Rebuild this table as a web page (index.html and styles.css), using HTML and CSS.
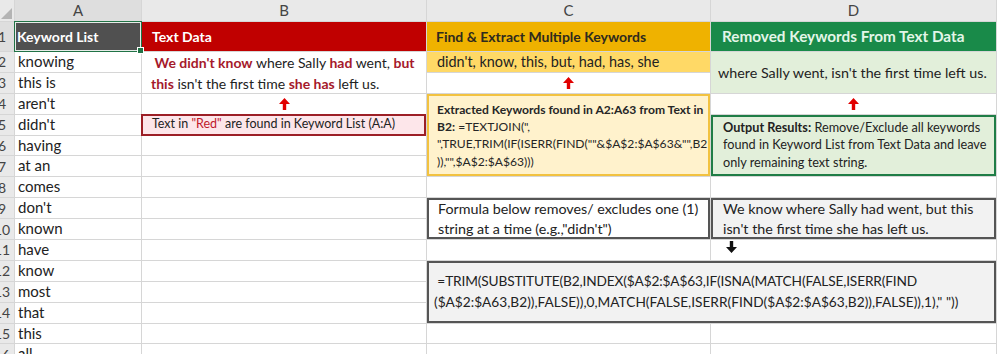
FILE: index.html
```html
<!DOCTYPE html>
<html>
<head>
<meta charset="utf-8">
<link rel="stylesheet" href="styles.css">
</head>
<body>
<div class="sheet">
  <div class="corner"><svg width="14" height="21" viewBox="0 0 14 21"><polygon points="12,8 12,19 1,19" fill="#b4b4b4"/></svg></div>
  <div class="ch sel">A</div>
  <div class="ch">B</div>
  <div class="ch">C</div>
  <div class="ch">D</div>

  <!-- row 1 -->
  <div class="rh sel"><span>1</span></div>
  <div class="hd a1">Keyword List<i class="handle"></i></div>
  <div class="hd b1">Text Data</div>
  <div class="hd c1">Find &amp; Extract Multiple Keywords</div>
  <div class="hd d1">Removed Keywords From Text Data</div>

  <!-- merged / special cells -->
  <div class="b2">&nbsp;<span class="kw">We didn't know</span> where Sally <span class="kw">had</span> went, <span class="kw">but</span><br><span class="kw">this</span> isn't the first time <span class="kw">she has</span> left us.</div>
  <div class="c2">didn't, know, this, but, had, has, she</div>
  <div class="arrow c3"><svg width="11" height="12" viewBox="0 0 11 12"><polygon points="5.5,0 11,6 7.2,6 7.2,12 3.8,12 3.8,6 0,6" fill="#e00000"/></svg></div>
  <div class="d2">where Sally went, isn't the first time left us.</div>
  <div class="arrow b4"><svg width="11" height="12" viewBox="0 0 11 12"><polygon points="5.5,0 11,6 7.2,6 7.2,12 3.8,12 3.8,6 0,6" fill="#e00000"/></svg></div>
  <div class="arrow d4"><svg width="11" height="12" viewBox="0 0 11 12"><polygon points="5.5,0 11,6 7.2,6 7.2,12 3.8,12 3.8,6 0,6" fill="#e00000"/></svg></div>
  <div class="box c4"><b>Extracted Keywords found in A2:A63 from Text in</b><br><b>B2:</b> =TEXTJOIN(",<br>",TRUE,TRIM(IF(ISERR(FIND(""&amp;$A$2:$A$63&amp;"",B2<br>)),"",$A$2:$A$63)))</div>
  <div class="b5">Text in <span class="red">"Red"</span> are found in Keyword List (A:A)</div>
  <div class="box d5"><b>Output Results:</b> Remove/Exclude all keywords<br>found in Keyword List from Text Data and leave<br>only remaining text string.</div>
  <div class="box mid c9"><div>Formula below removes/ excludes one (1)<br>string at a time (e.g.,"didn't")</div></div>
  <div class="box mid d9"><div>We know where Sally had went, but this<br>isn't the first time she has left us.</div></div>
  <div class="arrow d11"><svg width="11" height="12" viewBox="0 0 11 12"><polygon points="5.5,12 11,6 7.2,6 7.2,0 3.8,0 3.8,6 0,6" fill="#111"/></svg></div>
  <div class="box c12"><span class="f1">&nbsp;=TRIM(SUBSTITUTE(B2,INDEX($A$2:$A$63,IF(ISNA(MATCH(FALSE,ISERR(FIND</span><br>($A$2:$A63,B2)),FALSE)),0,MATCH(FALSE,ISERR(FIND($A$2:$A$63,B2)),FALSE)),1)," "))</div>

  <!-- row 2 -->
  <div class="rh"><span>2</span></div><div class="a">knowing</div>
  <!-- row 3 -->
  <div class="rh"><span>3</span></div><div class="a">this is</div>
  <!-- row 4 -->
  <div class="rh"><span>4</span></div><div class="a">aren't</div>
  <!-- row 5 -->
  <div class="rh"><span>5</span></div><div class="a">didn't</div>
  <!-- row 6 -->
  <div class="rh"><span>6</span></div><div class="a">having</div><div class="c"></div>
  <!-- row 7 -->
  <div class="rh"><span>7</span></div><div class="a">at an</div><div class="c"></div>
  <!-- row 8 -->
  <div class="rh"><span>8</span></div><div class="a">comes</div><div class="c"></div><div class="c"></div><div class="c"></div>
  <!-- row 9 -->
  <div class="rh"><span>9</span></div><div class="a">don't</div><div class="c"></div>
  <!-- row 10 -->
  <div class="rh"><span>10</span></div><div class="a">known</div><div class="c"></div>
  <!-- row 11 -->
  <div class="rh"><span>11</span></div><div class="a">have</div><div class="c"></div><div class="c"></div>
  <!-- row 12 -->
  <div class="rh"><span>12</span></div><div class="a">know</div><div class="c"></div>
  <!-- row 13 -->
  <div class="rh"><span>13</span></div><div class="a">most</div><div class="c"></div>
  <!-- row 14 -->
  <div class="rh"><span>14</span></div><div class="a">that</div><div class="c"></div>
  <!-- row 15 -->
  <div class="rh"><span>15</span></div><div class="a">this</div><div class="c"></div><div class="c"></div><div class="c"></div>
  <!-- row 16 -->
  <div class="rh"><span>16</span></div><div class="a">all</div><div class="c"></div><div class="c"></div><div class="c"></div>
</div>
</body>
</html>
```
FILE: styles.css
```css
html, body {
  margin: 0;
  padding: 0;
}
body {
  width: 998px;
  height: 354px;
  overflow: hidden;
  background: #fff;
  font-family: Lato, "Open Sans", sans-serif;
  color: #222;
}
.sheet {
  display: grid;
  grid-template-columns: 14px 126px 284px 283px 285px;
  grid-template-rows: 21px 29px repeat(15, 19.9px);
  gap: 1px;
  background: #d6d6d6;
  width: max-content;
  padding-right: 1px;
}
.corner {
  background: #e9e9e9;
}
.corner svg { display: block; }
.ch {
  background: #e9e9e9;
  color: #444;
  font-size: 15px;
  line-height: 21px;
  text-align: center;
}
.ch.sel { background: #dedede; }
.rh {
  grid-column: 1;
  background: #e9e9e9;
  color: #444;
  font-size: 14px;
  overflow: hidden;
  display: flex;
  align-items: center;
}
.rh.sel { background: #dedede; }
.rh span {
  flex: 0 0 24px;
  margin-left: -10px;
  text-align: center;
}
.a, .c { background: #fff; }
.a {
  font-size: 15px;
  line-height: 19px;
  padding-left: 3px;
  white-space: nowrap;
}
.hd {
  font-weight: bold;
  font-size: 14px;
  line-height: 29px;
  white-space: nowrap;
}
.a1 {
  position: relative;
  z-index: 2;
  background: #505050;
  color: #fff;
  padding-left: 2px;
  outline: 1px solid #217346;
  box-shadow: inset 0 0 0 1px #e6ece8;
}
.handle {
  position: absolute;
  right: -3px;
  bottom: -3px;
  width: 5px;
  height: 5px;
  background: #217346;
  border: 1px solid #fff;
}
.b1 { background: #c00000; color: #fff; padding-left: 10px; }
.c1 { background: #efb200; color: #2e2a1e; padding-left: 9px; }
.d1 { background: #198a49; color: #e3f6e8; padding-left: 11px; font-size: 15.3px; }

.b2 {
  grid-row: 3 / span 2;
  grid-column: 3;
  background: #fff;
  font-size: 14px;
  line-height: 21px;
  padding: 0 0 0 9px;
  white-space: nowrap;
}
.kw { color: #a5192b; font-weight: bold; }
.red { color: #c0182a; }
.c2 {
  grid-row: 3;
  grid-column: 4;
  background: #ffd966;
  font-size: 14.4px;
  line-height: 19px;
  padding-left: 10px;
  white-space: nowrap;
}
.d2 {
  grid-row: 3 / span 2;
  grid-column: 5;
  background: #e2efda;
  font-size: 14.3px;
  display: flex;
  align-items: center;
  padding-left: 7px;
  white-space: nowrap;
}
.arrow {
  background: #fff;
  display: flex;
  align-items: center;
  justify-content: center;
}
.arrow svg { display: block; }
.c3 { grid-row: 4; grid-column: 4; }
.b4 { grid-row: 5; grid-column: 3; }
.d4 { grid-row: 5; grid-column: 5; }
.d11 {
  grid-row: 12;
  grid-column: 5;
  justify-content: flex-start;
  align-items: flex-start;
  padding-left: 15px;
  padding-top: 1px;
}

.box {
  box-sizing: border-box;
  white-space: nowrap;
}
.c4 {
  grid-row: 5 / span 4;
  grid-column: 4;
  background: #fff2cc;
  border: 2px solid #f2c240;
  font-size: 12.1px;
  line-height: 17.3px;
  padding: 5px 0 0 8px;
  color: #262626;
}
.b5 {
  grid-row: 6;
  grid-column: 3;
  background: #fde6ea;
  border: 2px solid #9c1f26;
  box-sizing: border-box;
  font-size: 12.5px;
  line-height: 16px;
  padding-left: 9px;
  margin: -1px 0 -1px -1px;
  white-space: nowrap;
}
.d5 {
  grid-row: 6 / span 3;
  grid-column: 5;
  background: #e2efda;
  border: 2px solid #1f7d46;
  font-size: 12.7px;
  line-height: 17.5px;
  padding: 2px 0 0 10px;
}
.mid {
  display: flex;
  align-items: center;
  font-size: 14.3px;
  line-height: 20px;
  border: 2px solid #555;
}
.c9 {
  grid-row: 10 / span 2;
  grid-column: 4;
  background: #fff;
  padding: 0 0 0 9px;
}
.d9 {
  grid-row: 10 / span 2;
  grid-column: 5;
  background: #f2f2f2;
  padding: 0 0 0 10px;
}
.c12 {
  grid-row: 13 / span 3;
  grid-column: 4 / span 2;
  background: #f2f2f2;
  border: 2px solid #555;
  font-size: 13.7px;
  line-height: 21px;
  padding: 7px 0 0 5px;
}
.f1 { letter-spacing: -0.15px; }
```
